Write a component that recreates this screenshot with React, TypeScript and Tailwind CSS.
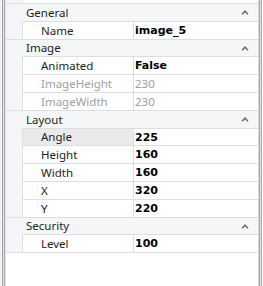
import React from "react";

type Row =
  | { kind: "cat"; label: string; h: string }
  | { kind: "prop"; name: string; value: string; h: string; disabled?: boolean; selected?: boolean };

const rows: Row[] = [
  { kind: "cat", label: "General", h: "h-[18px]" },
  { kind: "prop", name: "Name", value: "image_5", h: "h-[18px]" },
  { kind: "cat", label: "Image", h: "h-[17px]" },
  { kind: "prop", name: "Animated", value: "False", h: "h-[18px]" },
  { kind: "prop", name: "ImageHeight", value: "230", h: "h-[18px]", disabled: true },
  { kind: "prop", name: "ImageWidth", value: "230", h: "h-[18px]", disabled: true },
  { kind: "cat", label: "Layout", h: "h-[18px]" },
  { kind: "prop", name: "Angle", value: "225", h: "h-[17px]", selected: true },
  { kind: "prop", name: "Height", value: "160", h: "h-[18px]" },
  { kind: "prop", name: "Width", value: "160", h: "h-[18px]" },
  { kind: "prop", name: "X", value: "320", h: "h-[18px]" },
  { kind: "prop", name: "Y", value: "220", h: "h-[18px]" },
  { kind: "cat", label: "Security", h: "h-[17px]" },
  { kind: "prop", name: "Level", value: "100", h: "h-[18px]" },
];

function Caret() {
  return (
    <svg width="8" height="5" viewBox="0 0 8 5" className="block">
      <path d="M1 4.2 L4 1.2 L7 4.2" fill="none" stroke="#6e6e6e" strokeWidth="1.6" />
    </svg>
  );
}

export default function App() {
  return (
    <div
      className="w-[263px] h-[286px] bg-white flex overflow-hidden"
      style={{ fontFamily: "'Noto Sans', sans-serif" }}
    >
      <div className="w-[2px] bg-[#f3f3f3]" />
      <div className="w-[1px] bg-[#9ea3a8]" />
      <div className="w-[1px] bg-[#e4e4e4]" />
      <div className="w-[1px] bg-[#a9adb2]" />
      <div className="w-[1px] bg-[#e2e4e8]" />
      <div className="w-[253px] flex flex-col border-r border-[#dadce0]">
        <div className="h-[3px] flex">
          <div className="w-[16px] bg-[#f5f6f8]" />
          <div className="flex-1 border-l border-[#dcdee2] bg-white" />
        </div>
        {rows.map((r, i) =>
          r.kind === "cat" ? (
            <div
              key={i}
              className={`${r.h} flex items-center bg-[#f5f6f8] border-t border-[#dcdee2] pl-[20px] pr-[9px] text-[11.5px] text-[#1e1e1e] leading-none`}
            >
              <span className="flex-1">{r.label}</span>
              <Caret />
            </div>
          ) : (
            <div key={i} className={`${r.h} flex`}>
              <div className="w-[16px] bg-[#f5f6f8]" />
              <div className="flex-1 flex border-t border-l border-[#dcdee2]">
                <div
                  className={`w-[111px] flex items-center pl-[18px] text-[11.5px] leading-none border-r border-[#dcdee2] ${
                    r.selected ? "bg-[#eaeaea]" : "bg-white"
                  } ${r.disabled ? "text-[#a0a0a0]" : "text-[#1e1e1e]"}`}
                >
                  {r.name}
                </div>
                <div
                  className={`flex-1 flex items-center pl-[1px] leading-none ${
                    r.disabled
                      ? "text-[#a0a0a0] text-[11.5px]"
                      : "text-black font-bold text-[11px]"
                  }`}
                  style={r.disabled ? undefined : { fontFamily: "'DejaVu Sans', sans-serif" }}
                >
                  {r.value}
                </div>
              </div>
            </div>
          )
        )}
        <div className="border-t border-[#dcdee2] flex-1 bg-white" />
      </div>
      <div className="w-[1px] bg-[#9ea3a8]" />
      <div className="w-[1px] bg-[#e4e4e4]" />
      <div className="w-[1px] bg-[#a9adb2]" />
      <div className="w-[1px] bg-white" />
    </div>
  );
}
